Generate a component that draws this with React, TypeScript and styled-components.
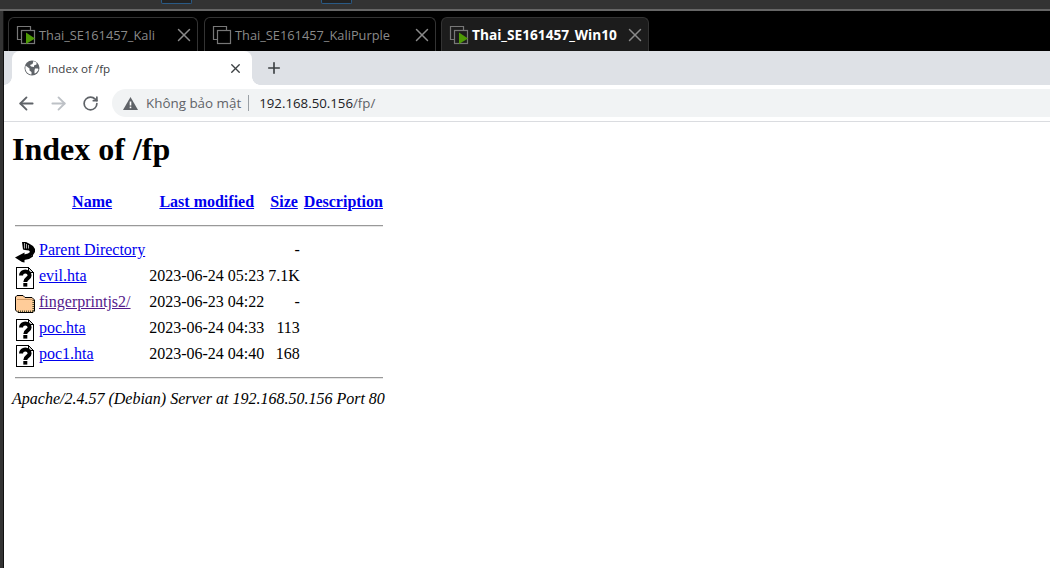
import React from "react";
import styled, { createGlobalStyle } from "styled-components";
import { X, ArrowLeft, ArrowRight, RotateCw, Plus } from "lucide-react";

const files = [
  { icon: "back", name: "Parent Directory", date: "", size: "-" },
  { icon: "unknown", name: "evil.hta", date: "2023-06-24 05:23", size: "7.1K" },
  { icon: "folder", name: "fingerprintjs2/", date: "2023-06-23 04:22", size: "-", visited: true },
  { icon: "unknown", name: "poc.hta", date: "2023-06-24 04:33", size: "113" },
  { icon: "unknown", name: "poc1.hta", date: "2023-06-24 04:40", size: "168" },
];

const vmTabs = [
  { name: "Thai_SE161457_Kali", width: 190, running: true },
  { name: "Thai_SE161457_KaliPurple", width: 232, running: false },
  { name: "Thai_SE161457_Win10", width: 208, running: true, active: true },
];

const App = () => {
  return (
    <Screen>
      <GlobalStyle />
      <TopRail>
        <RailButton />
        <RailButton />
      </TopRail>
      <Body>
        <LeftRail />
        <Main>
          <VmTabBar>
            {vmTabs.map((tab) => (
              <VmTab key={tab.name} $width={tab.width} $active={tab.active}>
                <VmIcon running={tab.running} />
                <VmTabName $active={tab.active}>{tab.name}</VmTabName>
                <VmClose>
                  <X size={22} strokeWidth={1.6} />
                </VmClose>
              </VmTab>
            ))}
          </VmTabBar>

          <ChromeTabBar>
            <ChromeTab>
              <GlobeIcon />
              <ChromeTabTitle>Index of /fp</ChromeTabTitle>
              <ChromeTabClose>
                <X size={15} strokeWidth={2.2} />
              </ChromeTabClose>
            </ChromeTab>
            <NewTab>
              <Plus size={18} strokeWidth={2.2} />
            </NewTab>
          </ChromeTabBar>

          <Toolbar>
            <NavButton $disabled={false}>
              <ArrowLeft size={21} strokeWidth={2.1} />
            </NavButton>
            <NavButton $disabled>
              <ArrowRight size={21} strokeWidth={2.1} />
            </NavButton>
            <NavButton $disabled={false}>
              <RotateCw size={17} strokeWidth={2.4} />
            </NavButton>
            <Omnibox>
              <WarningIcon />
              <SecurityLabel>Không bảo mật</SecurityLabel>
              <OmniDivider />
              <UrlHost>192.168.50.156</UrlHost>
              <UrlPath>/fp/</UrlPath>
            </Omnibox>
          </Toolbar>

          <Page>
            <Heading>Index of /fp</Heading>
            <Listing>
              <tbody>
                <tr>
                  <HeadCell />
                  <HeadCell>
                    <FileLink href="#">Name</FileLink>
                  </HeadCell>
                  <HeadCell>
                    <FileLink href="#">Last modified</FileLink>
                  </HeadCell>
                  <HeadCell>
                    <FileLink href="#">Size</FileLink>
                  </HeadCell>
                  <HeadCell>
                    <FileLink href="#">Description</FileLink>
                  </HeadCell>
                </tr>
                <tr>
                  <HeadCell colSpan={5}>
                    <Rule $top={10} $bottom={10} />
                  </HeadCell>
                </tr>
                {files.map((file) => (
                  <tr key={file.name}>
                    <Cell>
                      <FileIcon kind={file.icon} />
                    </Cell>
                    <Cell>
                      <FileLink href="#" $visited={file.visited}>
                        {file.name}
                      </FileLink>
                    </Cell>
                    <RightCell>{file.date}</RightCell>
                    <RightCell>{file.size}</RightCell>
                    <Cell>&nbsp;</Cell>
                  </tr>
                ))}
                <tr>
                  <HeadCell colSpan={5}>
                    <Rule $top={6} $bottom={7} />
                  </HeadCell>
                </tr>
              </tbody>
            </Listing>
            <ServerLine>
              Apache/2.4.57 (Debian) Server at 192.168.50.156 Port 80
            </ServerLine>
          </Page>
        </Main>
      </Body>
    </Screen>
  );
};

export default App;

const VmIcon = ({ running }: { running?: boolean }) => (
  <VmIconSvg width="20" height="20" viewBox="0 0 20 20" fill="none">
    <path d="M5 14.5H1.5V1.5H14.5V5" stroke="#777" strokeWidth="1.2" />
    <rect x="5.5" y="5.5" width="13" height="13" stroke="#777" strokeWidth="1.2" fill="none" />
    {running && <path d="M10 7.5L19 13.5L10 19Z" fill="#4e9a06" />}
  </VmIconSvg>
);

const GlobeIcon = () => (
  <svg width="16" height="16" viewBox="0 0 16 16">
    <circle cx="8" cy="8" r="7.5" fill="#5f6368" />
    <path
      d="M1.5 5.5L5.5 8.5V10.5L7.5 12V14.5C4.5 14.5 2 12 1.4 9ZM9.5 1L12.5 2.5V4.5L10 5.5V7L7 6.5L6 5L8.5 4Z M11 8.5H14L14.5 10L12 13L10.5 13.5V10.5Z"
      fill="#fff"
    />
  </svg>
);

const WarningIcon = () => (
  <svg width="15" height="13" viewBox="0 0 15 13">
    <path d="M7.5 0L15 13H0Z" fill="#5f6368" />
    <rect x="6.7" y="4.5" width="1.6" height="4" fill="#fff" />
    <rect x="6.7" y="9.6" width="1.6" height="1.6" fill="#fff" />
  </svg>
);

const FileIcon = ({ kind }: { kind: string }) => {
  if (kind === "back") {
    return (
      <IconSvg width="20" height="22" viewBox="0 0 20 22">
        <path d="M7 1H11L14 2.5L18 5L20 8V11L18 14L14 16L9 17V13.5L13 12.5L15 11L14 9.5L10 9L8 8.5Z" fill="#000" />
        <path d="M9 2H10V7.5H9ZM11 3H12V7.5H11ZM13 4H14V7.5H13Z" fill="#aaa" />
        <path d="M9.5 11.5V21.5L7 21L0 16.5Z" fill="#000" />
        <path d="M9 15.5L16 15L18 13.5V15.5L14 18L9 19Z" fill="#000" />
      </IconSvg>
    );
  }
  if (kind === "folder") {
    return (
      <IconSvg width="20" height="22" viewBox="0 0 20 22">
        <path
          d="M2 2.5H8L10 4.5H17L19.5 7V18L18 19.5H3L0.5 17V4Z"
          fill="#fc9"
          stroke="#000"
          strokeWidth="1"
        />
        <path d="M2 6.5H17.5" stroke="#c96" strokeWidth="1" />
        <path d="M18.2 7V18.5M3 18.3H18" stroke="#553" strokeWidth="1.6" strokeDasharray="1 1" />
      </IconSvg>
    );
  }
  return (
    <IconSvg width="20" height="22" viewBox="0 0 20 22">
      <path d="M1.5 0.5H13.5L18.5 5.5V21.5H1.5Z" fill="#fff" stroke="#000" strokeWidth="1" shapeRendering="crispEdges" />
      <path d="M13.5 1V5.5H18" fill="#ccc" stroke="#000" strokeWidth="1" shapeRendering="crispEdges" />
      <path d="M6 8.5C6 3 14.6 3 14.6 8.5C14.6 11.5 10.3 11.5 10.3 15" fill="none" stroke="#000" strokeWidth="4" />
      <rect x="8.3" y="16" width="4" height="3.6" fill="#000" />
    </IconSvg>
  );
};

const GlobalStyle = createGlobalStyle`
  html, body {
    margin: 0;
    padding: 0;
    background: #000;
    overflow: hidden;
  }
`;

const Screen = styled.div`
  width: 1050px;
  height: 568px;
  display: flex;
  flex-direction: column;
  overflow: hidden;
  background: #333;
`;

const TopRail = styled.div`
  height: 9px;
  flex: none;
  display: flex;
  align-items: flex-start;
  gap: 129px;
  padding-left: 161px;
  background: #333;
  border-bottom: 2px solid #666;
`;

const RailButton = styled.div`
  width: 29px;
  height: 3px;
  background: #222;
  border: 1px solid #2a5a85;
  border-top: none;
  border-radius: 0 0 2px 2px;
`;

const Body = styled.div`
  flex: 1;
  display: flex;
  min-height: 0;
`;

const LeftRail = styled.div`
  width: 3px;
  flex: none;
  background: #333;
  border-right: 1px solid #111;
`;

const Main = styled.div`
  flex: 1;
  display: flex;
  flex-direction: column;
  min-width: 0;
  background: #fff;
`;

const VmTabBar = styled.div`
  height: 34px;
  flex: none;
  display: flex;
  align-items: flex-end;
  gap: 5px;
  padding: 6px 0 0 4px;
  background: #000;
`;

const VmTab = styled.div<{ $width: number; $active?: boolean }>`
  width: ${({ $width }) => $width}px;
  height: 34px;
  box-sizing: border-box;
  display: flex;
  align-items: center;
  padding: 0 2px 0 7px;
  background: ${({ $active }) => ($active ? "#1c1c1c" : "#000")};
  border: 1px solid #333;
  border-bottom: none;
  border-radius: 6px 6px 0 0;
  &:first-child {
    margin-right: 1px;
  }
`;

const VmIconSvg = styled.svg`
  flex: none;
  margin-right: 3px;
`;

const VmTabName = styled.span<{ $active?: boolean }>`
  flex: 1;
  font: ${({ $active }) => ($active ? "700 13.7px" : "400 12.8px")} "Open Sans", "Noto Sans", sans-serif;
  color: ${({ $active }) => ($active ? "#fff" : "#8a8a8a")};
  white-space: nowrap;
`;

const VmClose = styled.span`
  display: flex;
  color: #8a8a8a;
`;

const ChromeTabBar = styled.div`
  height: 34px;
  flex: none;
  display: flex;
  align-items: stretch;
  padding-left: 8px;
  background: #dee1e6;
`;

const ChromeTab = styled.div`
  position: relative;
  width: 240px;
  box-sizing: border-box;
  display: flex;
  align-items: center;
  gap: 8px;
  padding: 0 9px 0 12px;
  background: #fff;
  border-radius: 8px 8px 0 0;
  &::before,
  &::after {
    content: "";
    position: absolute;
    bottom: 0;
    width: 8px;
    height: 8px;
  }
  &::before {
    right: 100%;
    background: radial-gradient(circle at 0 0, #dee1e6 7.5px, #fff 8px);
  }
  &::after {
    left: 100%;
    background: radial-gradient(circle at 100% 0, #dee1e6 7.5px, #fff 8px);
  }
`;

const ChromeTabTitle = styled.span`
  flex: 1;
  font: 400 11.6px "Open Sans", "Noto Sans", sans-serif;
  color: #3c4043;
`;

const ChromeTabClose = styled.span`
  display: flex;
  color: #3c4043;
`;

const NewTab = styled.span`
  display: flex;
  align-items: center;
  margin-left: 13px;
  color: #3c4043;
`;

const Toolbar = styled.div`
  height: 36px;
  flex: none;
  box-sizing: border-box;
  display: flex;
  align-items: center;
  padding: 4px 0 4px 6px;
  background: #fff;
`;

const NavButton = styled.span<{ $disabled: boolean }>`
  width: 32px;
  display: flex;
  justify-content: center;
  color: ${({ $disabled }) => ($disabled ? "#bdc1c6" : "#5f6368")};
`;

const Omnibox = styled.div`
  flex: 1;
  height: 28px;
  margin-left: 6px;
  display: flex;
  align-items: center;
  padding-left: 11px;
  background: #f1f3f4;
  border-radius: 14px 0 0 14px;
  font: 400 14px "Open Sans", "Noto Sans", sans-serif;
`;

const SecurityLabel = styled.span`
  margin-left: 8px;
  font-size: 13.4px;
  color: #5f6368;
`;

const OmniDivider = styled.span`
  width: 1px;
  height: 16px;
  margin: 0 10px 0 7px;
  background: #9aa0a6;
`;

const UrlHost = styled.span`
  font-size: 13.25px;
  color: #202124;
`;

const UrlPath = styled.span`
  font-size: 13.25px;
  color: #5f6368;
`;

const Page = styled.div`
  flex: 1;
  border-top: 1px solid #dadce0;
  padding: 9px 8px 0;
  font: 16px "Liberation Serif", "Times New Roman", serif;
  color: #000;
  background: #fff;
`;

const Heading = styled.h1`
  margin: 0 0 22px;
  font-size: 32px;
  font-weight: 700;
  line-height: 37px;
`;

const Listing = styled.table`
  border-spacing: 2px;
`;

const HeadCell = styled.th`
  padding: 1px;
  text-align: center;
  vertical-align: top;
`;

const Cell = styled.td`
  padding: 1px;
  vertical-align: top;
`;

const RightCell = styled(Cell)`
  text-align: right;
`;

const IconSvg = styled.svg`
  display: block;
`;

const FileLink = styled.a<{ $visited?: boolean }>`
  color: ${({ $visited }) => ($visited ? "#551a8b" : "#0000ee")};
  text-decoration: underline;
`;

const Rule = styled.hr<{ $top: number; $bottom: number }>`
  margin: ${({ $top }) => $top}px 0 ${({ $bottom }) => $bottom}px;
  border-style: solid;
  border-width: 1px 0;
  border-color: #999 transparent #e6e6e6;
  height: 0;
`;

const ServerLine = styled.address`
  font-style: italic;
  margin-top: 1px;
  white-space: nowrap;
`;
